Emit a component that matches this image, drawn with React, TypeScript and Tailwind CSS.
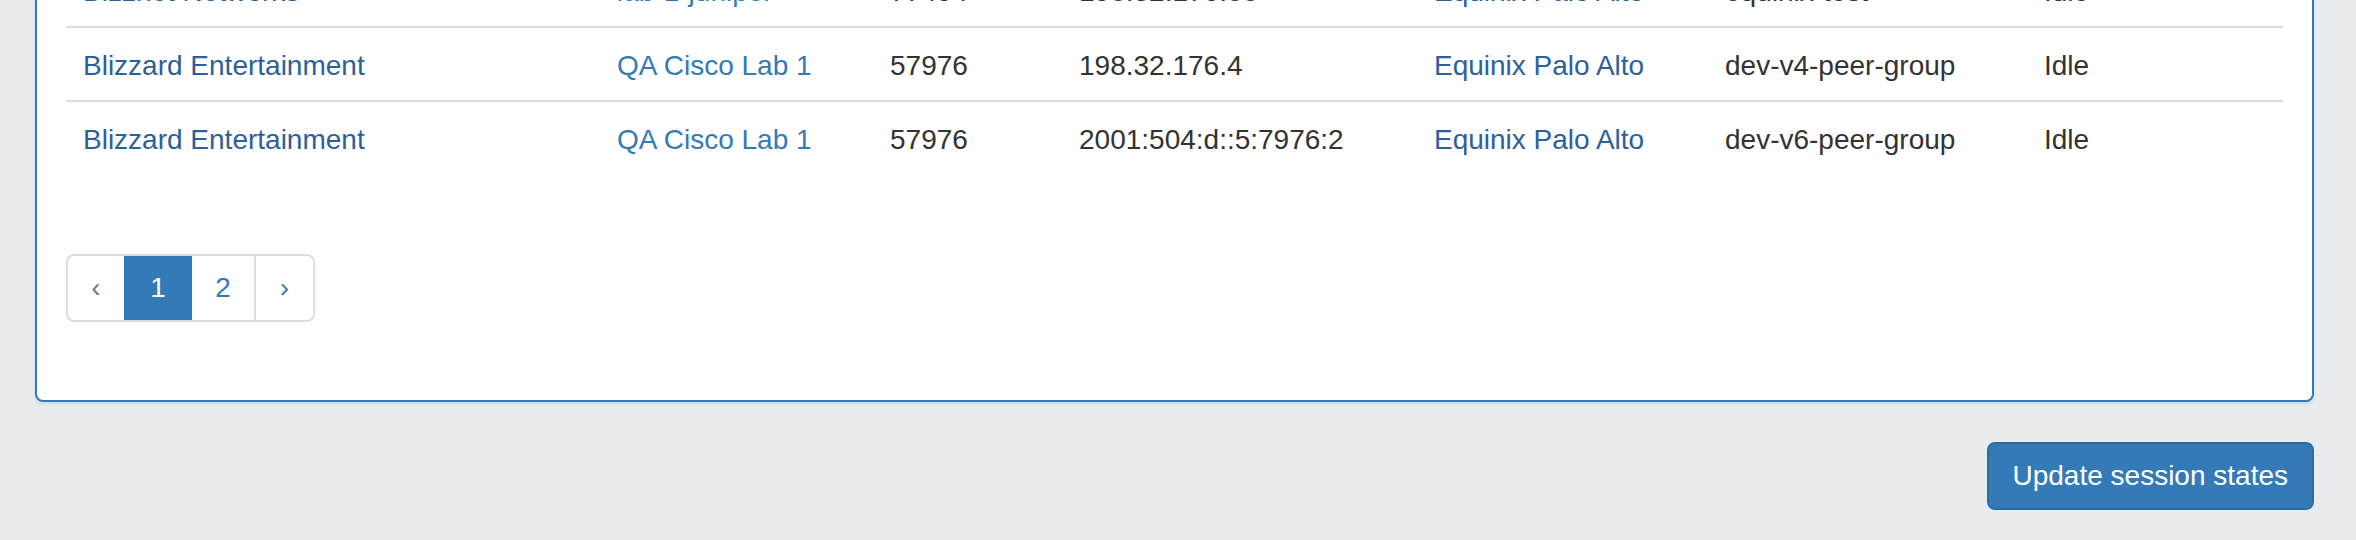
import React from 'react';

type Row = {
  org: string;
  router: string;
  asn: string;
  ip: string;
  ix: string;
  group: string;
  state: string;
};

const ROWS: Row[] = [
  { org: 'Bizznet Networks', router: 'lab-1-juniper', asn: '77494', ip: '198.32.176.88', ix: 'Equinix Palo Alto', group: 'equinix-test', state: 'Idle' },
  { org: 'Blizzard Entertainment', router: 'QA Cisco Lab 1', asn: '57976', ip: '198.32.176.4', ix: 'Equinix Palo Alto', group: 'dev-v4-peer-group', state: 'Idle' },
  { org: 'Blizzard Entertainment', router: 'QA Cisco Lab 1', asn: '57976', ip: '2001:504:d::5:7976:2', ix: 'Equinix Palo Alto', group: 'dev-v6-peer-group', state: 'Idle' },
];

// bootstrap-ish cell, doubled for the retina capture
const cell = 'pl-[17px] pr-[15px] pt-[18px] pb-[14px] leading-[40px] whitespace-nowrap';

export default function App() {
  return (
    <div
      className="h-[540px] overflow-hidden bg-[#e8ecef] text-[28px] text-[#333333]"
      style={{ fontFamily: '"Liberation Sans", Arial, Helvetica, sans-serif' }}
    >
      <div className="ml-[35px] mr-[42px] flex flex-col">
        {/* Sessions panel */}
        <div className="mt-[-60px] rounded-[8px] border-2 border-[#337ab7] bg-white px-[29px] pt-[12px] pb-[78px] shadow-[0_2px_3px_rgba(51,122,183,0.15)]">
          <div className="flex flex-col">
            {ROWS.map((r, i) => (
              <div
                key={i}
                className={`grid grid-cols-[534px_273px_189px_355px_291px_319px_254px] ${
                  i > 0 ? 'border-t-2 border-[#dddddd]' : ''
                }`}
              >
                <div className={`${cell} text-[#2d5f9b]`}>{r.org}</div>
                <div className={`${cell} text-[#337ab7]`}>{r.router}</div>
                <div className={cell}>{r.asn}</div>
                <div className={cell}>{r.ip}</div>
                <div className={`${cell} text-[#2d5f9b]`}>{r.ix}</div>
                <div className={cell}>{r.group}</div>
                <div className={cell}>{r.state}</div>
              </div>
            ))}
          </div>

          {/* Pagination */}
          <div className="mt-[80px] flex">
            <div className="flex h-[68px] overflow-hidden rounded-[8px] border-2 border-[#dddddd] leading-[40px]">
              <span className="flex w-[56px] items-center justify-center text-[#777777]">‹</span>
              <span className="flex w-[68px] items-center justify-center bg-[#337ab7] text-white">1</span>
              <span className="flex w-[64px] items-center justify-center border-r-2 border-[#dddddd] text-[#337ab7]">2</span>
              <span className="flex w-[57px] items-center justify-center text-[#337ab7]">›</span>
            </div>
          </div>
        </div>

        {/* Actions */}
        <div className="mt-[40px] flex justify-end">
          <button
            type="button"
            className="h-[68px] rounded-[8px] border-2 border-[#2e6da4] bg-[#337ab7] px-[24px] leading-[40px] text-white"
          >
            Update session states
          </button>
        </div>
      </div>
    </div>
  );
}
